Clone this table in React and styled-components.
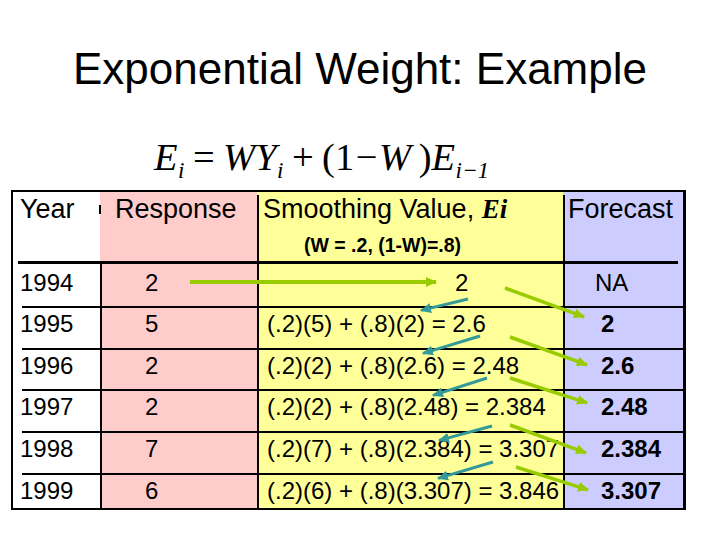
import React from 'react';
import styled, { createGlobalStyle } from 'styled-components';

const Global = createGlobalStyle`
  html, body { margin: 0; padding: 0; background: #fff; }
  body { font-family: "Liberation Sans", Arial, sans-serif; color: #000; }
`;

const Slide = styled.div`
  position: relative;
  width: 720px;
  height: 540px;
  overflow: hidden;
  display: flex;
  flex-direction: column;
`;

const Title = styled.h1`
  margin: 44px 0 0;
  font-weight: normal;
  font-size: 44px;
  line-height: 50px;
  text-align: center;
`;

const Formula = styled.div`
  margin: 41px 0 0 154px;
  height: 44px;
  font-family: "Liberation Serif", "Times New Roman", serif;
  font-size: 38.5px;
  line-height: 44px;
  white-space: nowrap;
`;

const Var = styled.span`
  font-style: italic;
`;

const Sub = styled.span`
  font-style: italic;
  font-size: 0.6em;
  position: relative;
  top: 0.35em;
  margin-left: 0.02em;
`;

const Op = styled.span`
  margin: 0 ${(p) => p.$gap ?? 0.18}em;
`;

const COLORS = { year: '#ffffff', resp: '#ffcccc', smooth: '#ffff99', fc: '#ccccff' };

const Table = styled.div`
  box-sizing: border-box;
  margin: 11px 0 0 11px;
  width: 675px;
  height: 320px;
  border: 2px solid #000;
  border-right-width: 3px;
  display: grid;
  grid-template-columns: 87px 157px 306px 120px;
  grid-template-rows: 72px repeat(5, 41.8px) 1fr;
  overflow: hidden;
`;

const HeadCell = styled.div`
  position: relative;
  box-sizing: border-box;
  background:
    linear-gradient(#000, #000) ${(p) => (p.$col === 'fc' ? 'left' : 'right')} bottom / ${(p) =>
      p.$col === 'year' ? 'calc(100% - 5px)' : p.$col === 'fc' ? 'calc(100% - 5px)' : '100%'} 3px no-repeat,
    linear-gradient(#000, #000) left 3px / ${(p) => (p.$col === 'smooth' || p.$col === 'fc' ? '2px' : '0')} 100% no-repeat,
    ${(p) => COLORS[p.$col]};
  padding: 2px 0 0 ${(p) => p.$pad}px;
  font-size: 27px;
  line-height: 31px;
  white-space: nowrap;
`;

const Tick = styled.span`
  position: absolute;
  left: -1px;
  top: 13px;
  width: 2px;
  height: 9px;
  background: #000;
`;

const EiMark = styled.span`
  font-family: "Liberation Serif", "Times New Roman", serif;
  font-style: italic;
  font-weight: bold;
`;

const WeightNote = styled.div`
  margin: 9px 0 0 ${(p) => p.$pad}px;
  font-size: 19.5px;
  font-weight: bold;
  line-height: 22px;
`;

const BodyCell = styled.div`
  box-sizing: border-box;
  background:
    linear-gradient(#000, #000) right top / ${(p) => (p.$col === 'year' ? 'calc(100% - 9px)' : '100%')} ${(p) =>
      p.$first ? 0 : 2}px no-repeat,
    ${(p) => COLORS[p.$col]};
  border-left: ${(p) => (p.$col === 'year' ? '0' : '2px solid #000')};
  padding: ${(p) => (p.$first ? 5 : 4)}px 0 0 ${(p) => p.$pad}px;
  font-size: 24px;
  line-height: 28px;
  font-weight: ${(p) => (p.$bold ? 'bold' : 'normal')};
  white-space: nowrap;
`;

const Overlay = styled.svg`
  position: absolute;
  left: 0;
  top: 0;
  width: 720px;
  height: 540px;
  pointer-events: none;
`;

const rows = [
  { year: '1994', resp: '2', smooth: '2', sPad: 196, fc: 'NA', fPad: 30, bold: false },
  { year: '1995', resp: '5', smooth: '(.2)(5) + (.8)(2) = 2.6', sPad: 8, fc: '2', fPad: 36, bold: true },
  { year: '1996', resp: '2', smooth: '(.2)(2) + (.8)(2.6) = 2.48', sPad: 8, fc: '2.6', fPad: 36, bold: true },
  { year: '1997', resp: '2', smooth: '(.2)(2) + (.8)(2.48) = 2.384', sPad: 8, fc: '2.48', fPad: 36, bold: true },
  { year: '1998', resp: '7', smooth: '(.2)(7) + (.8)(2.384) = 3.307', sPad: 8, fc: '2.384', fPad: 36, bold: true },
  { year: '1999', resp: '6', smooth: '(.2)(6) + (.8)(3.307) = 3.846', sPad: 8, fc: '3.307', fPad: 36, bold: true },
];

const GREEN = '#99cc00';
const TEAL = '#339999';

const greenArrows = [
  [505, 288, 590, 319],
  [510, 337, 593, 367],
  [510, 378, 593, 405],
  [510, 425, 592, 455],
  [516, 467, 594, 492],
];

const tealArrows = [
  [468, 299, 415, 312],
  [480, 336, 417, 355],
  [487, 378, 427, 397],
  [492, 426, 433, 442],
  [493, 462, 432, 480],
];

function Arrows() {
  return (
    <Overlay viewBox="0 0 720 540">
      <defs>
        <marker id="hg" markerUnits="userSpaceOnUse" markerWidth="12" markerHeight="10" refX="10" refY="5" orient="auto">
          <path d="M0 0 L11 5 L0 10 Z" fill={GREEN} />
        </marker>
        <marker id="ht" markerUnits="userSpaceOnUse" markerWidth="12" markerHeight="10" refX="10" refY="5" orient="auto">
          <path d="M0 0 L11 5 L0 10 Z" fill={TEAL} />
        </marker>
      </defs>
      <line x1="190" y1="282" x2="436" y2="282" stroke={GREEN} strokeWidth="4" markerEnd="url(#hg)" />
      {greenArrows.map(([x1, y1, x2, y2], i) => (
        <line key={'g' + i} x1={x1} y1={y1} x2={x2 - 6} y2={y2 - 2.2} stroke={GREEN} strokeWidth="3.5" markerEnd="url(#hg)" />
      ))}
      {tealArrows.map(([x1, y1, x2, y2], i) => (
        <line key={'t' + i} x1={x1} y1={y1} x2={x2 + 6} y2={y2 - 1.6} stroke={TEAL} strokeWidth="3" markerEnd="url(#ht)" />
      ))}
    </Overlay>
  );
}

export default function App() {
  return (
    <>
      <Global />
      <Slide>
        <Title>Exponential Weight: Example</Title>
        <Formula>
          <Var>E</Var>
          <Sub>i</Sub>
          <Op $gap={0.22}>=</Op>
          <Var>WY</Var>
          <Sub>i</Sub>
          <Op $gap={0.22}>+</Op>
          (1
          <Op $gap={0.04}>−</Op>
          <Var>W</Var>
          &thinsp;)
          <Var>E</Var>
          <Sub>i−1</Sub>
        </Formula>
        <Table>
          <HeadCell $col="year" $pad={7}>Year</HeadCell>
          <HeadCell $col="resp" $pad={15}>
            <Tick />
            Response
          </HeadCell>
          <HeadCell $col="smooth" $pad={6}>
            Smoothing Value, <EiMark>Ei</EiMark>
            <WeightNote $pad={41}>(W = .2, (1-W)=.8)</WeightNote>
          </HeadCell>
          <HeadCell $col="fc" $pad={5}>Forecast</HeadCell>
          {rows.map((r, i) => (
            <React.Fragment key={r.year}>
              <BodyCell $col="year" $first={i === 0} $pad={7}>{r.year}</BodyCell>
              <BodyCell $col="resp" $first={i === 0} $pad={43}>{r.resp}</BodyCell>
              <BodyCell $col="smooth" $first={i === 0} $pad={r.sPad}>{r.smooth}</BodyCell>
              <BodyCell $col="fc" $first={i === 0} $pad={r.fPad} $bold={r.bold}>{r.fc}</BodyCell>
            </React.Fragment>
          ))}
        </Table>
        <Arrows />
      </Slide>
    </>
  );
}
